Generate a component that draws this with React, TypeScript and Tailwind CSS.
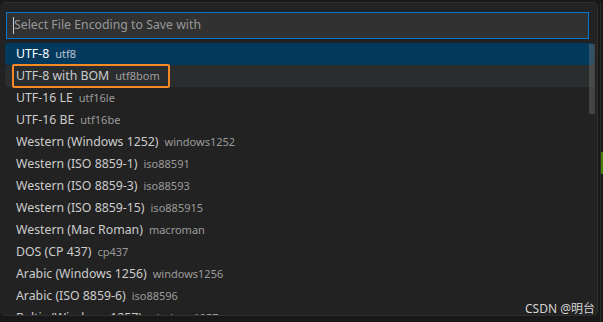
const items = [
  { label: 'UTF-8', desc: 'utf8' },
  { label: 'UTF-8 with BOM', desc: 'utf8bom' },
  { label: 'UTF-16 LE', desc: 'utf16le' },
  { label: 'UTF-16 BE', desc: 'utf16be' },
  { label: 'Western (Windows 1252)', desc: 'windows1252' },
  { label: 'Western (ISO 8859-1)', desc: 'iso88591' },
  { label: 'Western (ISO 8859-3)', desc: 'iso88593' },
  { label: 'Western (ISO 8859-15)', desc: 'iso885915' },
  { label: 'Western (Mac Roman)', desc: 'macroman' },
  { label: 'DOS (CP 437)', desc: 'cp437' },
  { label: 'Arabic (Windows 1256)', desc: 'windows1256' },
  { label: 'Arabic (ISO 8859-6)', desc: 'iso88596' },
  { label: 'Baltic (Windows 1257)', desc: 'windows1257' },
];

const App = () => {
  return (
    <div
      className="relative flex w-[603px] h-[322px] overflow-hidden bg-[#181818] pt-[2px]"
      style={{ fontFamily: '"Noto Sans", "Noto Sans CJK SC", sans-serif' }}
    >
      {/* Quick pick panel */}
      <div className="relative flex flex-col w-[598px] h-[314px] overflow-hidden rounded-[6px] border border-l-0 border-[#2f2f2f] bg-[#222222]">
        <div className="px-[6px] pt-[9px] pb-[4px]">
          <div className="flex items-center h-[27px] w-[583px] border border-[#0078d4] bg-[#313131] px-[6px]">
            <span className="w-px h-[17px] bg-[#cccccc]" />
            <span className="text-[12.3px] text-[#989898] leading-none">
              Select File Encoding to Save with
            </span>
          </div>
        </div>

        <ul className="flex flex-col px-[5px] pr-[3px]">
          {items.map((item, i) => (
            <li
              key={item.desc}
              className={
                'flex items-center h-[22px] shrink-0 rounded-[3px] pl-[11px] text-[12.3px] ' +
                (i === 0
                  ? 'bg-[#04395e] text-white'
                  : i === 1
                    ? 'bg-[#2a2d2e] text-[#cccccc]'
                    : 'text-[#cccccc]')
              }
            >
              <span className="relative flex items-baseline whitespace-nowrap">
                <span>{item.label}</span>
                <span className="ml-[6px] text-[11px] opacity-70">{item.desc}</span>
                {i === 1 && (
                  <span className="absolute -left-[4px] -right-[10px] -top-[3px] -bottom-[3px] rounded-[2px] border-2 border-[#f58a24]" />
                )}
              </span>
            </li>
          ))}
        </ul>

        {/* scrollbar thumb */}
        <div className="absolute right-[2px] top-[41px] w-[6px] h-[70px] bg-[#797979]/40" />
      </div>

      {/* editor gutter on the right */}
      <div className="flex-1 relative border-l border-[#2b2b2b] ml-[2px]">
        <div className="absolute left-0 top-[150px] w-[2px] h-[22px] bg-[#487e02]" />
      </div>

      <span className="absolute right-[8px] bottom-[7px] text-[12px] leading-none text-[#d4d4d4]">
        CSDN @明台
      </span>
    </div>
  );
};

export default App;
